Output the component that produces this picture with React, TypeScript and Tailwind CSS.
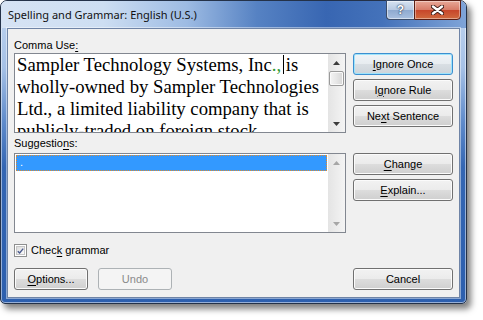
import type { ReactNode } from 'react'

function U({ children }: { children: ReactNode }) {
  return <span className="underline decoration-1 underline-offset-[2px]">{children}</span>
}

function Btn({
  children,
  className = '',
  focused = false,
  disabled = false,
}: {
  children: ReactNode
  className?: string
  focused?: boolean
  disabled?: boolean
}) {
  let look =
    'border-[#707070] bg-[linear-gradient(180deg,#f2f2f2_0%,#ebebeb_50%,#dddddd_50%,#cfcfcf_100%)] shadow-[inset_0_0_0_1px_#fbfbfb] text-black'
  if (focused)
    look =
      'border-[#3c8fd0] bg-[linear-gradient(180deg,#f0f4f7_0%,#e7ecf0_50%,#d9dfe4_50%,#cdd4da_100%)] shadow-[inset_0_0_0_1px_#9fe4fb] text-black'
  if (disabled) look = 'border-[#adb2b5] bg-[#f4f4f4] text-[#8a8a8a]'
  return (
    <div
      className={`h-[22px] flex items-center justify-center rounded-[3px] border text-[11px] leading-none ${look} ${className}`}
    >
      {children}
    </div>
  )
}

function Arrow({ up, color }: { up?: boolean; color: string }) {
  return (
    <svg width="7" height="4" viewBox="0 0 7 4">
      <polygon points={up ? '0,4 7,4 3.5,0' : '0,0 7,0 3.5,4'} fill={color} />
    </svg>
  )
}

function ScrollBar({ disabled = false }: { disabled?: boolean }) {
  const c = disabled ? '#a6a6a6' : '#3b3b3b'
  return (
    <div className="w-[17px] h-full flex flex-col bg-[linear-gradient(90deg,#e4e4e4,#f4f4f4)]">
      <div className="h-[17px] flex items-center justify-center">
        <Arrow up color={c} />
      </div>
      {!disabled && (
        <div className="mx-[1px] h-[15px] rounded-[2px] border border-[#9a9a9a] bg-[linear-gradient(90deg,#f4f4f4,#e6e6e6_50%,#d6d6d6)] shadow-[inset_0_0_0_1px_#fafafa]" />
      )}
      <div className="flex-1" />
      <div className="h-[17px] flex items-center justify-center">
        <Arrow color={c} />
      </div>
    </div>
  )
}

export default function App() {
  return (
    <div className="w-[483px] h-[320px] bg-white font-['Liberation_Sans',Arial,sans-serif]">
      <div className="w-[467px] h-[304px] flex flex-col rounded-t-[7px] rounded-b-[5px] border border-[#243249] bg-[linear-gradient(180deg,#c2d6f0_0%,#a6c1e6_22%,#5f8bcb_40%,#3466b3_55%,#2c5fae_100%)] shadow-[4px_5px_6px_rgba(0,0,0,0.5),inset_0_0_0_1px_rgba(255,255,255,0.5)]">
        {/* title bar */}
        <div className="h-[27px] flex items-start justify-between rounded-t-[6px] bg-[linear-gradient(90deg,#d6e3f4_0%,#cddef2_22%,#9dbbe3_40%,#5682c3_55%,#3866b2_70%,#4472ba_82%,#7fa4d8_100%)]">
          <div className="pl-[7px] h-full flex items-center pt-[2px] text-[11px] text-[#111] font-['Noto_Sans',sans-serif]">
            Spelling and Grammar: English (U.S.)
          </div>
          <div className="flex mr-[5px] -mt-[1px]">
            <div className="w-[28px] h-[20px] flex items-center justify-center rounded-bl-[4px] border border-[#3b4c69] border-r-0 bg-[linear-gradient(180deg,#d6e2f1_0%,#b7c9e2_50%,#8ea9cf_50%,#a9c0df_100%)] shadow-[inset_0_0_0_1px_rgba(255,255,255,0.5)]">
              <span className="text-white font-bold text-[12px] leading-none font-['Liberation_Sans',sans-serif] [text-shadow:0_0_2px_#23324d,0_0_1px_#23324d]">
                ?
              </span>
            </div>
            <div className="w-[47px] h-[20px] flex items-center justify-center rounded-br-[4px] border border-[#5a1e14] bg-[linear-gradient(180deg,#e8a898_0%,#d77a66_50%,#c7452a_50%,#d06a3e_100%)] shadow-[inset_0_0_0_1px_rgba(255,255,255,0.4)]">
              <svg width="13" height="10" viewBox="0 0 13 10">
                <path d="M2 1.5 L11 8.5 M11 1.5 L2 8.5" stroke="#3b1b16" strokeWidth="4.2" strokeLinecap="round" />
                <path d="M2 1.5 L11 8.5 M11 1.5 L2 8.5" stroke="#ffffff" strokeWidth="2.4" strokeLinecap="round" />
              </svg>
            </div>
          </div>
        </div>

        {/* client area */}
        <div className="mx-[6px] mb-[5px] flex-1 flex flex-col border border-[#6f84a6] bg-[#f0f0f0] pl-[6px] pr-[6px] pt-[8px] text-[11px] text-black shadow-[0_0_0_1px_rgba(255,255,255,0.45)]">
          <div className="h-[16px] leading-[16px]">
            Comma Use<U>:</U>
          </div>
          <div className="flex gap-[7px]">
            <div className="w-[332px] h-[80px] flex border border-[#828790] bg-white overflow-hidden">
              <div className="flex-1 h-[78px] overflow-hidden pl-[2px] text-[18.7px] leading-[22px] font-['Liberation_Serif','Times_New_Roman',serif] whitespace-nowrap">
                Sampler Technology Systems, Inc
                <span className="text-[#2f9a2f]">.,</span>
                <span className="relative">
                  {' '}
                  <span className="absolute left-[2px] top-[1px] w-px h-[19px] bg-black" />
                </span>
                is
                <br />
                wholly-owned by Sampler Technologies
                <br />
                Ltd., a limited liability company that is
                <br />
                publicly-traded on foreign stock
              </div>
              <ScrollBar />
            </div>
            <div className="flex flex-col gap-[4px]">
              <Btn className="w-[100px]" focused>
                <U>I</U>gnore Once
              </Btn>
              <Btn className="w-[100px]">
                I<U>g</U>nore Rule
              </Btn>
              <Btn className="w-[100px]">
                Ne<U>x</U>t Sentence
              </Btn>
            </div>
          </div>

          <div className="h-[20px] leading-[20px]">
            Suggestio<U>n</U>s:
          </div>
          <div className="flex gap-[7px]">
            <div className="w-[332px] h-[80px] flex border border-[#828790] bg-white">
              <div className="flex-1 p-[1px]">
                <div className="h-[16px] border border-dotted border-[#e08a2c] bg-[#3399ff] text-white leading-[12px] pl-[3px]">
                  .
                </div>
              </div>
              <ScrollBar disabled />
            </div>
            <div className="flex flex-col gap-[4px]">
              <Btn className="w-[100px]">
                <U>C</U>hange
              </Btn>
              <Btn className="w-[100px]">
                <U>E</U>xplain...
              </Btn>
            </div>
          </div>

          <div className="mt-[11px] h-[13px] flex items-center">
            <div className="w-[13px] h-[13px] border border-[#8e8f8f] bg-white p-[1px]">
              <div className="w-full h-full flex items-center justify-center border border-[#c6c6c6] bg-[linear-gradient(135deg,#dcdcdc,#fbfbfb)]">
                <svg width="9" height="8" viewBox="0 0 9 8">
                  <path d="M1 4.2 L3.4 6.6 L8 1" fill="none" stroke="#4a5a8c" strokeWidth="1.8" />
                </svg>
              </div>
            </div>
            <span className="ml-[4px] leading-none">
              Chec<U>k</U> grammar
            </span>
          </div>

          <div className="mt-[11px] flex">
            <Btn className="w-[74px]">
              <U>O</U>ptions...
            </Btn>
            <Btn className="w-[74px] ml-[10px]" disabled>
              Undo
            </Btn>
            <Btn className="w-[100px] ml-auto">Cancel</Btn>
          </div>
        </div>
      </div>
    </div>
  )
}
